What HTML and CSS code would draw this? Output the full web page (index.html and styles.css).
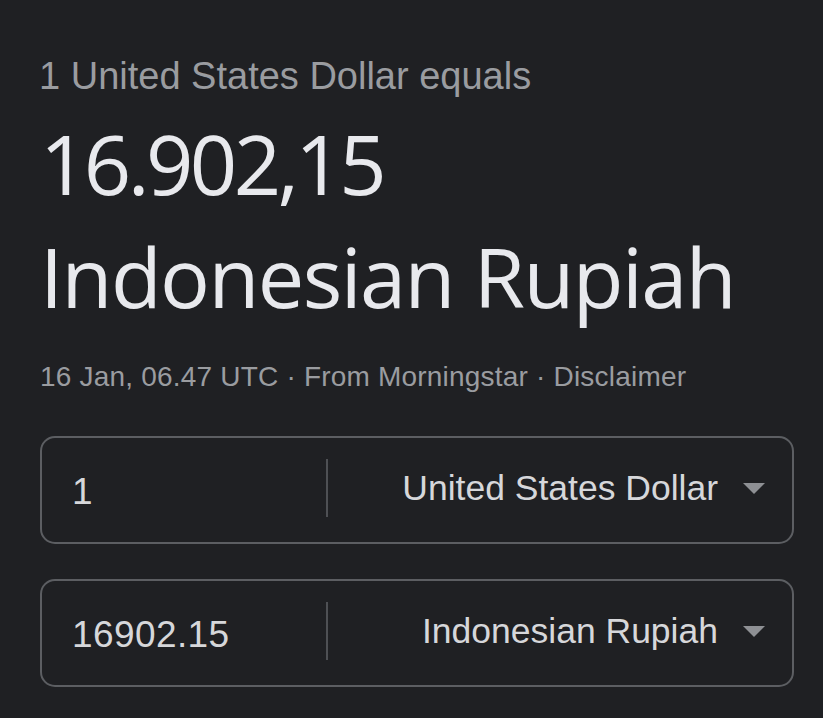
FILE: index.html
```html
<!DOCTYPE html>
<html lang="en">
<head>
<meta charset="utf-8">
<title>Currency converter</title>
<link rel="stylesheet" href="styles.css">
</head>
<body>
<main class="card">
  <div class="lead">1 United States Dollar equals</div>
  <div class="result">
    <div class="result-line result-number">16.902,15</div>
    <div class="result-line result-name">Indonesian Rupiah</div>
  </div>
  <div class="meta">16 Jan, 06.47 UTC · From Morningstar · Disclaimer</div>
  <div class="converter">
    <div class="row">
      <div class="amount">1</div>
      <div class="divider"></div>
      <div class="currency">
        <span class="currency-name">United States Dollar</span>
        <svg class="caret" width="22" height="11" viewBox="0 0 22 11"><path d="M0 0H22L11 11Z" fill="#8e9094"/></svg>
      </div>
    </div>
    <div class="row">
      <div class="amount">16902.15</div>
      <div class="divider"></div>
      <div class="currency">
        <span class="currency-name">Indonesian Rupiah</span>
        <svg class="caret" width="22" height="11" viewBox="0 0 22 11"><path d="M0 0H22L11 11Z" fill="#8e9094"/></svg>
      </div>
    </div>
  </div>
</main>
</body>
</html>
```

FILE: styles.css
```css
html, body {
  margin: 0;
  padding: 0;
  background: #1f2023;
}
.card {
  padding: 54px 29px 0 40px;
  font-family: "Liberation Sans", Arial, sans-serif;
}
.lead {
  font-size: 38px;
  line-height: 44px;
  color: #9a9ca0;
  margin-left: -1px;
}
.result {
  margin-top: 8px;
  font-family: "Open Sans", sans-serif;
  font-size: 83px;
  line-height: 113px;
  color: #e8e9ed;
}
.result-number {
  letter-spacing: -3.6px;
}
.result-name {
  letter-spacing: -1.6px;
}
.meta {
  margin-top: 29px;
  font-size: 28px;
  line-height: 32px;
  letter-spacing: 0.2px;
  color: #9a9ca0;
}
.converter {
  margin-top: 43px;
  display: flex;
  flex-direction: column;
  gap: 35px;
}
.row {
  display: flex;
  align-items: center;
  height: 108px;
  box-sizing: border-box;
  border: 2px solid #5c5e62;
  border-radius: 15px;
}
.amount {
  width: 254px;
  padding-left: 30px;
  margin-top: 4px;
  font-size: 37px;
  line-height: 40px;
  letter-spacing: 0.4px;
  color: #d6d7da;
}
.divider {
  width: 2px;
  height: 58px;
  background: #4e5054;
  margin-top: -4px;
}
.currency {
  flex: 1;
  display: flex;
  justify-content: flex-end;
  align-items: center;
  gap: 25px;
  padding-right: 27px;
  font-size: 35.5px;
  line-height: 40px;
  color: #d6d7da;
}
.currency-name {
  position: relative;
  top: -2px;
}
.caret {
  display: block;
  margin-top: -3px;
}
```
